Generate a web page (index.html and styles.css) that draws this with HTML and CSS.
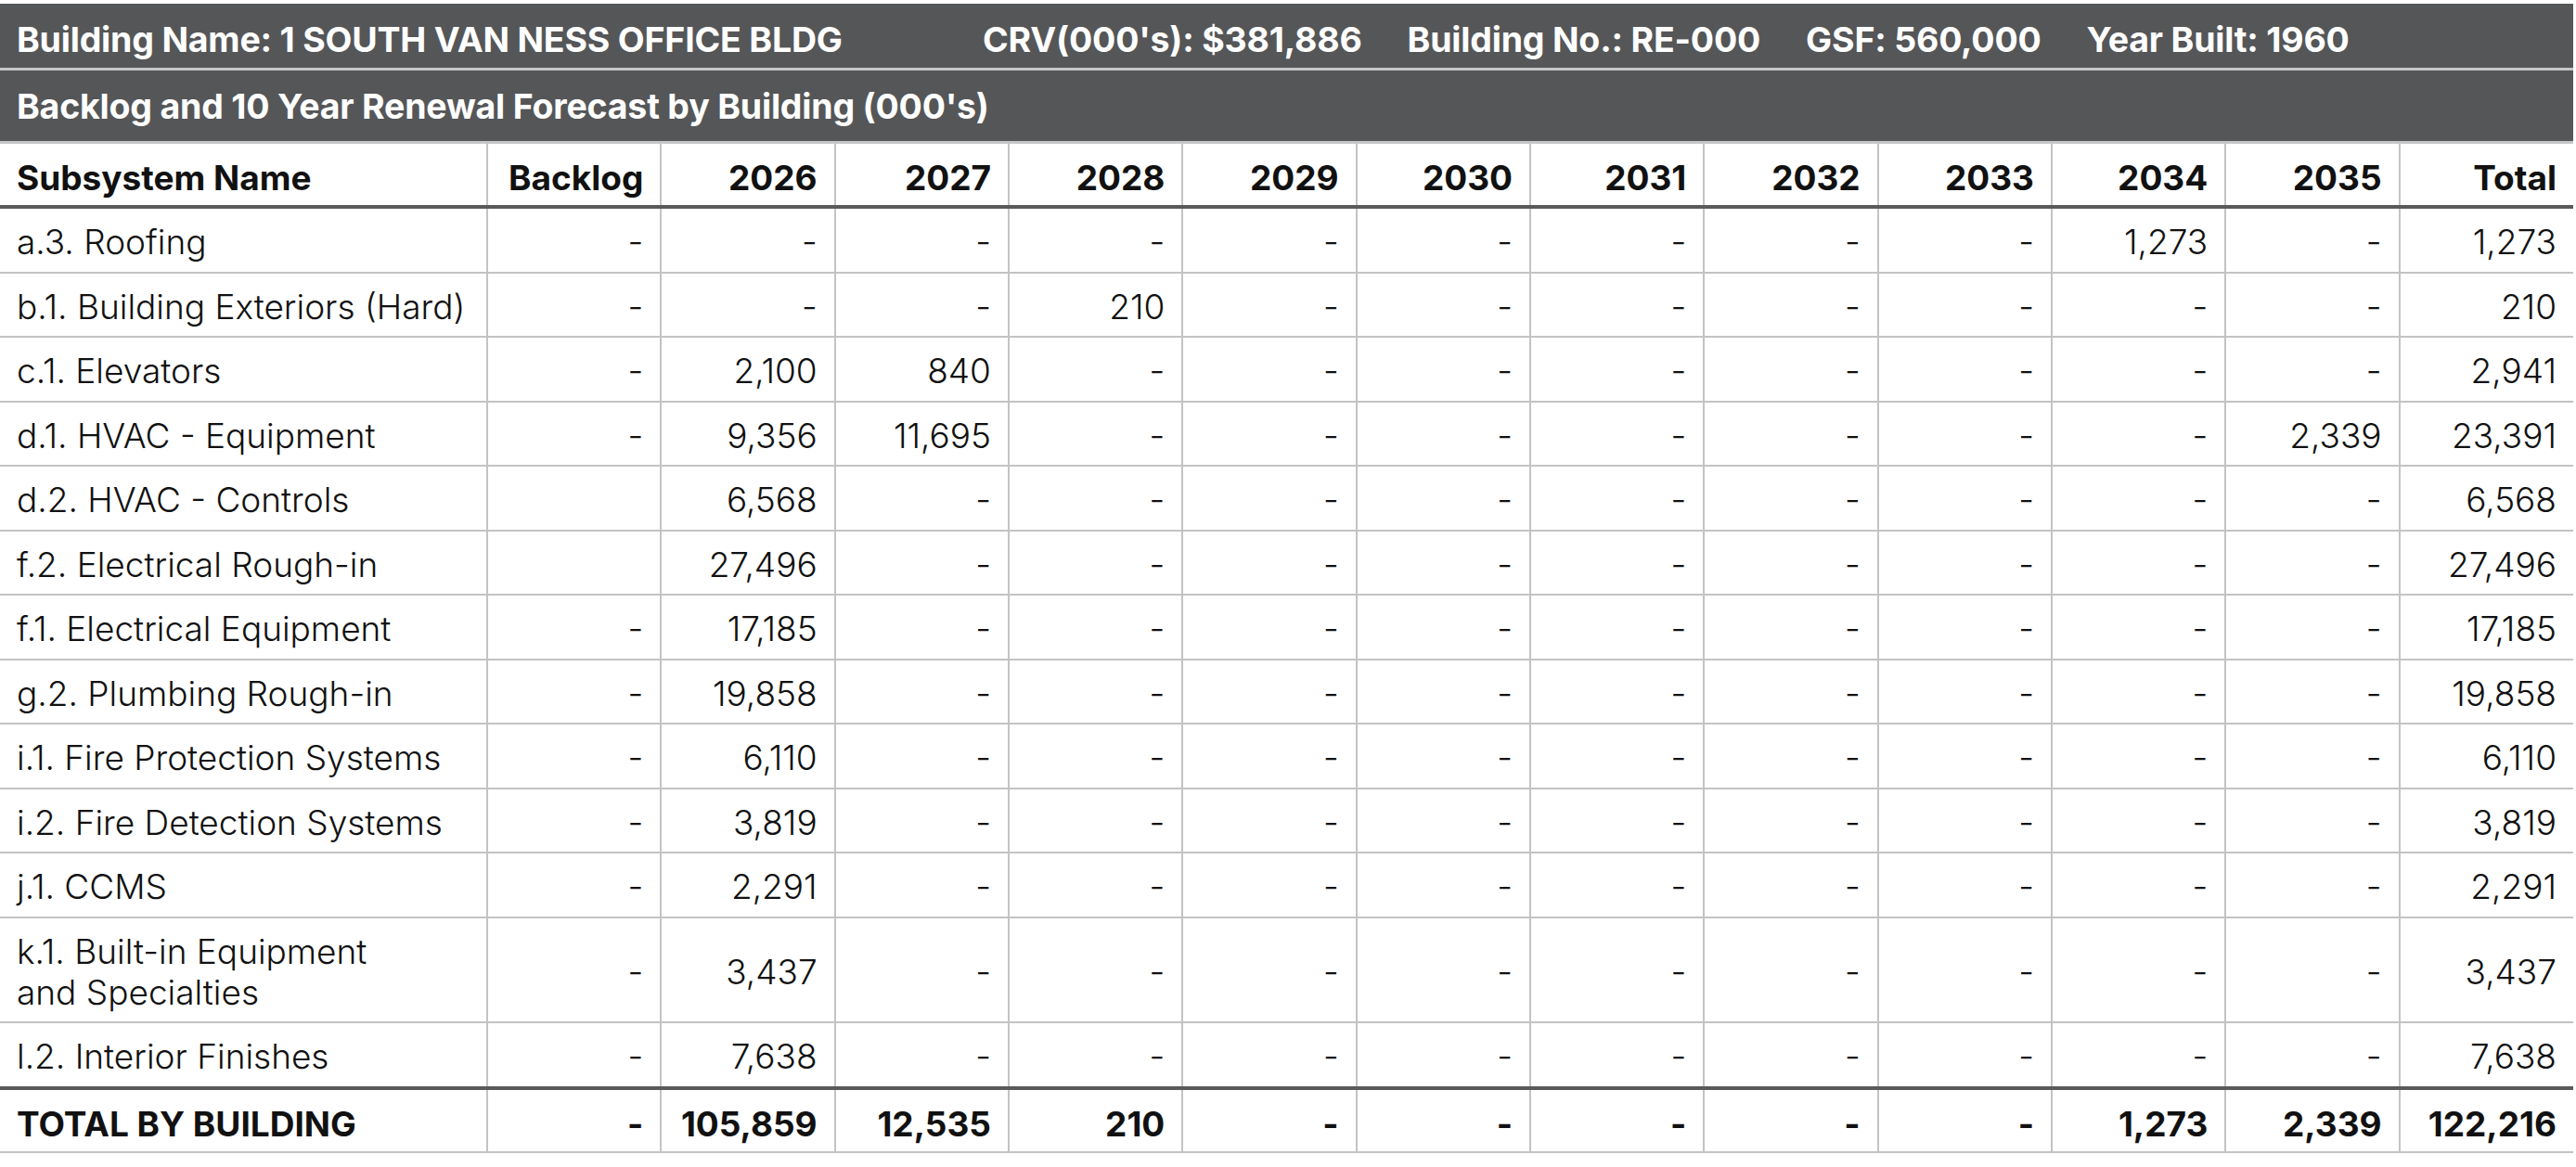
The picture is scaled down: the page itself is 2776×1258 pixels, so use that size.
FILE: index.html
```html
<!DOCTYPE html>
<html lang="en">
<head>
<meta charset="utf-8">
<title>Backlog and 10 Year Renewal Forecast</title>
<link rel="stylesheet" href="styles.css">
</head>
<body>
<div class="report">
  <div class="bar bar-info">
    <span class="info info-name">Building Name: 1 SOUTH VAN NESS OFFICE BLDG</span>
    <span class="info">CRV(000's): $381,886</span>
    <span class="info">Building No.: RE-000</span>
    <span class="info">GSF: 560,000</span>
    <span class="info">Year Built: 1960</span>
  </div>
  <div class="bar bar-title">Backlog and 10 Year Renewal Forecast by Building (000's)</div>
  <table class="grid">
    <colgroup>
      <col class="col-name">
      <col span="12">
    </colgroup>
    <thead>
      <tr>
        <th class="name">Subsystem Name</th>
        <th>Backlog</th><th>2026</th><th>2027</th><th>2028</th><th>2029</th><th>2030</th><th>2031</th><th>2032</th><th>2033</th><th>2034</th><th>2035</th><th>Total</th>
      </tr>
    </thead>
    <tbody>
      <tr><td class="name">a.3. Roofing</td><td>-</td><td>-</td><td>-</td><td>-</td><td>-</td><td>-</td><td>-</td><td>-</td><td>-</td><td>1,273</td><td>-</td><td>1,273</td></tr>
      <tr><td class="name">b.1. Building Exteriors (Hard)</td><td>-</td><td>-</td><td>-</td><td>210</td><td>-</td><td>-</td><td>-</td><td>-</td><td>-</td><td>-</td><td>-</td><td>210</td></tr>
      <tr><td class="name">c.1. Elevators</td><td>-</td><td>2,100</td><td>840</td><td>-</td><td>-</td><td>-</td><td>-</td><td>-</td><td>-</td><td>-</td><td>-</td><td>2,941</td></tr>
      <tr><td class="name">d.1. HVAC - Equipment</td><td>-</td><td>9,356</td><td>11,695</td><td>-</td><td>-</td><td>-</td><td>-</td><td>-</td><td>-</td><td>-</td><td>2,339</td><td>23,391</td></tr>
      <tr><td class="name">d.2. HVAC - Controls</td><td></td><td>6,568</td><td>-</td><td>-</td><td>-</td><td>-</td><td>-</td><td>-</td><td>-</td><td>-</td><td>-</td><td>6,568</td></tr>
      <tr><td class="name">f.2. Electrical Rough-in</td><td></td><td>27,496</td><td>-</td><td>-</td><td>-</td><td>-</td><td>-</td><td>-</td><td>-</td><td>-</td><td>-</td><td>27,496</td></tr>
      <tr><td class="name">f.1. Electrical Equipment</td><td>-</td><td>17,185</td><td>-</td><td>-</td><td>-</td><td>-</td><td>-</td><td>-</td><td>-</td><td>-</td><td>-</td><td>17,185</td></tr>
      <tr><td class="name">g.2. Plumbing Rough-in</td><td>-</td><td>19,858</td><td>-</td><td>-</td><td>-</td><td>-</td><td>-</td><td>-</td><td>-</td><td>-</td><td>-</td><td>19,858</td></tr>
      <tr><td class="name">i.1. Fire Protection Systems</td><td>-</td><td>6,110</td><td>-</td><td>-</td><td>-</td><td>-</td><td>-</td><td>-</td><td>-</td><td>-</td><td>-</td><td>6,110</td></tr>
      <tr><td class="name">i.2. Fire Detection Systems</td><td>-</td><td>3,819</td><td>-</td><td>-</td><td>-</td><td>-</td><td>-</td><td>-</td><td>-</td><td>-</td><td>-</td><td>3,819</td></tr>
      <tr><td class="name">j.1. CCMS</td><td>-</td><td>2,291</td><td>-</td><td>-</td><td>-</td><td>-</td><td>-</td><td>-</td><td>-</td><td>-</td><td>-</td><td>2,291</td></tr>
      <tr><td class="name">k.1. Built-in Equipment<br>and Specialties</td><td>-</td><td>3,437</td><td>-</td><td>-</td><td>-</td><td>-</td><td>-</td><td>-</td><td>-</td><td>-</td><td>-</td><td>3,437</td></tr>
      <tr class="last"><td class="name">l.2. Interior Finishes</td><td>-</td><td>7,638</td><td>-</td><td>-</td><td>-</td><td>-</td><td>-</td><td>-</td><td>-</td><td>-</td><td>-</td><td>7,638</td></tr>
    </tbody>
    <tfoot>
      <tr class="total"><td class="name">TOTAL BY BUILDING</td><td>-</td><td>105,859</td><td>12,535</td><td>210</td><td>-</td><td>-</td><td>-</td><td>-</td><td>-</td><td>1,273</td><td>2,339</td><td>122,216</td></tr>
    </tfoot>
  </table>
</div>
</body>
</html>
```

FILE: styles.css
```css
html, body {
  margin: 0;
  padding: 0;
  background: #ffffff;
}

body {
  font-family: Inter, "Open Sans", "Liberation Sans", sans-serif;
  color: #111111;
}

.report {
  width: 2773px;
  padding-top: 4px;
}

.bar {
  background: #555658;
  color: #ffffff;
  font-weight: 700;
  font-size: 37.5px;
  letter-spacing: -0.2px;
  padding: 0 18px;
  display: flex;
  align-items: center;
  border-bottom: 3px solid #c6c6c6;
  box-sizing: border-box;
}

.bar-info {
  height: 72px;
  padding-top: 8px;
  gap: 49px;
}

.info {
  white-space: nowrap;
}

.info-name {
  width: 992px;
  flex: none;
}

.bar-title {
  height: 79px;
}

.grid {
  width: 2773px;
  border-collapse: collapse;
  table-layout: fixed;
}

.col-name {
  width: 525px;
}

.grid th,
.grid td {
  padding: 14px 18px 9.5px 18px;
  text-align: right;
  font-size: 37px;
  line-height: 44px;
  border-right: 2px solid #c3c3c3;
  border-bottom: 2px solid #c3c3c3;
  white-space: nowrap;
  vertical-align: middle;
}

.grid th:last-child,
.grid td:last-child {
  border-right: none;
}

.grid th {
  font-weight: 700;
  padding-top: 15px;
  padding-bottom: 7px;
  border-bottom: 4px solid #5a5a5a;
}

.grid td {
  font-weight: 300;
}

.grid .name {
  text-align: left;
}

.grid tr.last td {
  border-bottom: 4px solid #5a5a5a;
}

.grid tr.total td {
  font-weight: 700;
  padding-top: 15px;
  padding-bottom: 7px;
}
```
